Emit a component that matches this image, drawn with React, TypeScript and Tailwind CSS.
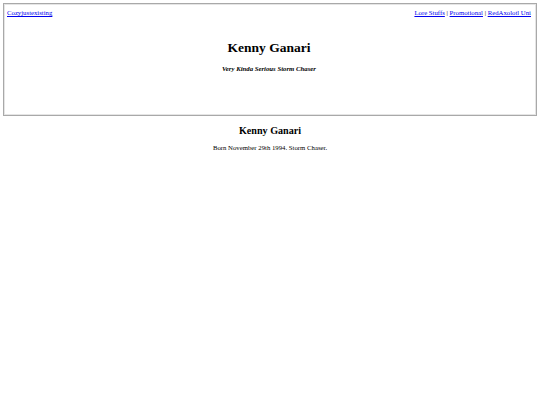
export default function App() {
  return (
    <div className="min-h-[405px] bg-white p-[3px] font-['Liberation_Serif',serif] text-black">
      <header className="flex h-[113px] flex-col border border-[#a9a9a9] pl-[3px] pr-[5px] pt-[4px] shadow-[inset_0_0_0_1px_#e5e5e5]">
        <nav className="flex justify-between text-[6.75px] leading-[9px]">
          <a href="#" className="text-[#0000ee] underline">Cozyjustexisting</a>
          <div>
            <a href="#" className="text-[#0000ee] underline">Lore Stuffs</a>
            {" | "}
            <a href="#" className="text-[#0000ee] underline">Promotional</a>
            {" | "}
            <a href="#" className="text-[#0000ee] underline">RedAxolotl Uni</a>
          </div>
        </nav>
        <h1 className="mt-[22px] text-center text-[13.5px] font-bold leading-[17px]">Kenny Ganari</h1>
        <p className="mt-[8px] text-center text-[6.75px] font-bold italic leading-[9px]">
          Very Kinda Serious Storm Chaser
        </p>
      </header>
      <h2 className="mt-[8px] text-center text-[10.1px] font-bold leading-[13px]">Kenny Ganari</h2>
      <p className="mt-[6px] text-center text-[6.75px] leading-[9px]">Born November 29th 1994. Storm Chaser.</p>
    </div>
  )
}
